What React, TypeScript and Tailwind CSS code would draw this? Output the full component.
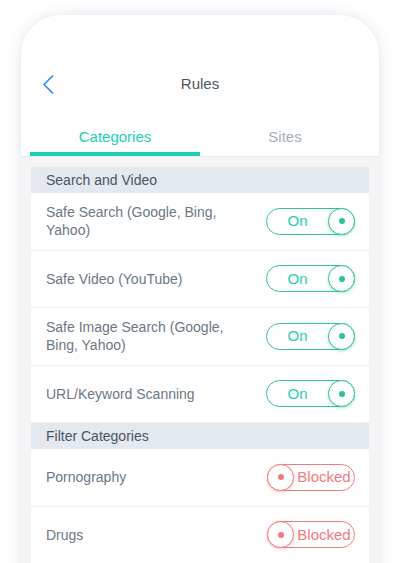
const font = { fontFamily: '"Liberation Sans", Arial, sans-serif' };

const searchRows = [
    'Safe Search (Google, Bing, Yahoo)',
    'Safe Video (YouTube)',
    'Safe Image Search (Google, Bing, Yahoo)',
    'URL/Keyword Scanning',
];

const filterRows = ['Pornography', 'Drugs'];

export default function App() {
    return (
        <div className="w-[400px] h-[563px] bg-white overflow-hidden pt-[15px] px-[21px]" style={font}>
            <div className="h-[600px] rounded-t-[40px] bg-[#f4f4f5] shadow-[0_0_14px_rgba(180,195,215,0.45)]">
                {/* header */}
                <div className="bg-white rounded-t-[40px] border-b border-[#e6e8ea] pt-[47px]">
                    <div className="relative h-[44px] flex items-center justify-center">
                        <svg className="absolute left-[21px] top-[13px]" width="12" height="19" viewBox="0 0 12 19" fill="none">
                            <polyline points="10.5,1 2,9.5 10.5,18" stroke="#2a8fe8" strokeWidth="1.7" strokeLinecap="round" strokeLinejoin="round" />
                        </svg>
                        <span className="text-[15px] text-[#4a5560]">Rules</span>
                    </div>
                    <div className="mt-[15px] px-[9px] flex">
                        <Tab label="Categories" active />
                        <Tab label="Sites" />
                    </div>
                </div>

                {/* content */}
                <div className="mx-[10px] mt-[10px] bg-white">
                    <SectionHeader title="Search and Video" />
                    {searchRows.map((r) => (
                        <Row key={r} label={r} on />
                    ))}
                    <SectionHeader title="Filter Categories" />
                    {filterRows.map((r) => (
                        <Row key={r} label={r} />
                    ))}
                </div>
            </div>
        </div>
    );
}

const Tab = ({ label, active = false }: { label: string; active?: boolean }) => (
    <div className="flex-1 flex flex-col items-center">
        <span className={`h-[31px] leading-[31px] text-[15px] ${active ? 'text-[#1ccfb0]' : 'text-[#a3aeb8]'}`}>{label}</span>
        <div className={`w-full h-[4px] ${active ? 'bg-[#1ccfb0]' : 'bg-transparent'}`}></div>
    </div>
);

const SectionHeader = ({ title }: { title: string }) => (
    <div className="h-[26px] bg-[#e3e9ef] pl-[15px] flex items-center text-[14px] text-[#4a5560]">{title}</div>
);

const Row = ({ label, on = false }: { label: string; on?: boolean }) => (
    <div className="h-[57.5px] border-b border-[#f0f1f2] pl-[15px] pr-[14px] flex items-center justify-between">
        <span className="w-[200px] text-[14px] leading-[18px] text-[#6b7783]">{label}</span>
        {on ? <OnToggle /> : <BlockedToggle />}
    </div>
);

const OnToggle = () => (
    <div className="w-[89px] h-[27px] rounded-full border border-[#2ec48e] flex items-center">
        <span className="flex-1 text-center text-[15px] text-[#1ccfb0]">On</span>
        <div className="w-[27px] h-[27px] -mr-px rounded-full border border-[#2ec48e] bg-white shadow-[0_1px_3px_rgba(46,196,142,0.45)] flex items-center justify-center">
            <div className="w-[6px] h-[6px] rounded-full bg-[#2ec48e]"></div>
        </div>
    </div>
);

const BlockedToggle = () => (
    <div className="w-[88px] h-[27px] rounded-full border border-[#f07a7a] flex items-center">
        <div className="w-[27px] h-[27px] -ml-px rounded-full border border-[#f07a7a] bg-white shadow-[0_1px_3px_rgba(240,122,122,0.45)] flex items-center justify-center">
            <div className="w-[6px] h-[6px] rounded-full bg-[#f07a7a]"></div>
        </div>
        <span className="flex-1 text-center text-[15px] text-[#f07a7a]">Blocked</span>
    </div>
);
